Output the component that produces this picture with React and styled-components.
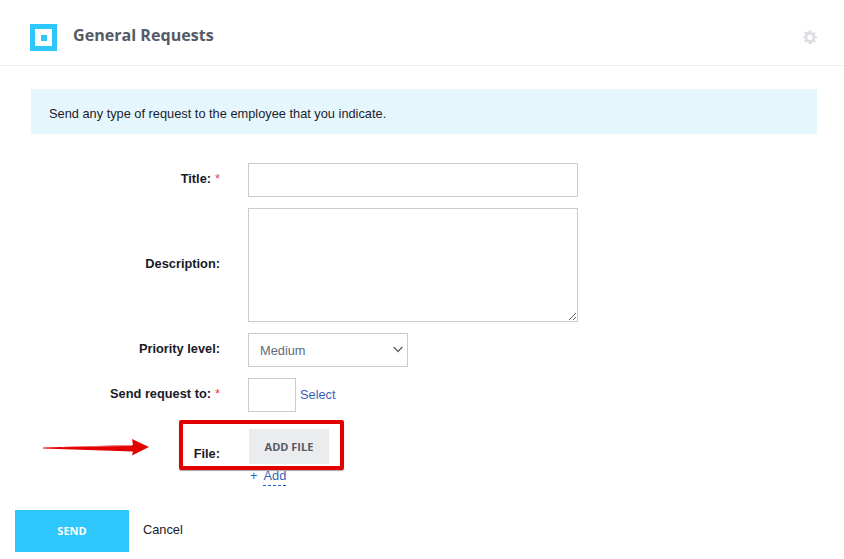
import React from 'react'
import styled, { createGlobalStyle } from 'styled-components'

const GlobalStyle = createGlobalStyle`
  html, body {
    margin: 0;
    padding: 0;
    background: #fff;
  }
  body {
    font-family: "Liberation Sans", Arial, sans-serif;
    font-size: 12.8px;
    color: #1a1a2a;
  }
`

const Page = styled.div`
  position: relative;
  width: 844px;
  height: 559px;
  overflow: hidden;
`

const Header = styled.header`
  display: flex;
  align-items: center;
  height: 66px;
  padding: 0 27px 0 30px;
  box-sizing: border-box;
  border-bottom: 1px solid #eeeff0;
`

const Logo = styled.div`
  display: flex;
  align-items: center;
  justify-content: center;
  width: 27px;
  height: 27px;
  margin-top: 10px;
  box-sizing: border-box;
  border: 5px solid #2ec7fb;
  &::after {
    content: '';
    width: 6px;
    height: 6px;
    background: #2ec7fb;
  }
`

const Title = styled.h1`
  flex: 1;
  margin: 4px 0 0 16px;
  font-family: "Open Sans", sans-serif;
  font-size: 16.1px;
  font-weight: 700;
  color: #555b66;
`

const Gear = styled.svg`
  width: 14px;
  height: 14px;
  margin-top: 8px;
  fill: #dcdee1;
`

const Notice = styled.div`
  margin: 23px 27px 0 31px;
  height: 45px;
  box-sizing: border-box;
  padding: 3px 0 0 18px;
  display: flex;
  align-items: center;
  background: #e5f7fc;
  font-size: 12.8px;
  color: #1c1c2c;
`

const Form = styled.div`
  display: flex;
  flex-direction: column;
  margin-top: 29px;
`

const Row = styled.div`
  display: grid;
  grid-template-columns: 220px 1fr;
  column-gap: 28px;
  align-items: center;
  margin-bottom: ${p => p.$gap ?? 11}px;
`

const Label = styled.label`
  text-align: right;
  font-weight: 700;
  font-size: 12.8px;
  color: #1a1a26;
  padding-top: ${p => p.$top ?? 0}px;
  padding-bottom: ${p => p.$bottom ?? 0}px;
`

const Star = styled.span`
  color: #e8404a;
  font-weight: 400;
  margin-left: 4px;
`

const TextInput = styled.input`
  display: block;
  width: ${p => p.$width}px;
  height: 34px;
  box-sizing: border-box;
  border: 1px solid #c8ccd0;
  background: #fff;
  outline: none;
`

const TextArea = styled.textarea`
  display: block;
  width: 330px;
  height: 114px;
  box-sizing: border-box;
  border: 1px solid #c8ccd0;
  background: #fff;
  outline: none;
`

const SelectWrap = styled.div`
  position: relative;
  width: 160px;
  height: 34px;
`

const Select = styled.select`
  display: block;
  width: 100%;
  height: 100%;
  box-sizing: border-box;
  padding-left: 11px;
  border: 1px solid #c8ccd0;
  border-radius: 0;
  background: #fff;
  appearance: none;
  font-family: "Liberation Sans", Arial, sans-serif;
  font-size: 12.8px;
  color: #5f6a78;
  outline: none;
`

const Chevron = styled.svg`
  position: absolute;
  right: 5px;
  top: 13px;
  width: 10px;
  height: 7px;
  fill: none;
  stroke: #5a5f66;
  stroke-width: 1.3;
  pointer-events: none;
`

const Inline = styled.div`
  display: flex;
  align-items: center;
  gap: 4px;
`

const SelectLink = styled.a`
  color: #3b5fb5;
  font-size: 12.8px;
  margin-bottom: 2px;
`

const AddFile = styled.button`
  display: block;
  width: 80px;
  height: 35px;
  margin-left: 1px;
  border: 0;
  background: #ebecee;
  color: #555b66;
  font-family: "Open Sans", sans-serif;
  font-size: 11px;
  font-weight: 700;
`

const AddRow = styled.div`
  display: flex;
  gap: 6px;
  margin: 4px 0 0 250px;
  font-size: 12.8px;
  line-height: 16px;
  color: #2a62c4;
`

const AddLink = styled.a`
  color: #3b5fb5;
  padding-bottom: 1px;
  border-bottom: 1px dashed #1f5fd0;
`

const Actions = styled.div`
  display: flex;
  align-items: flex-start;
  gap: 14px;
  margin: 24px 0 0 15px;
`

const SendButton = styled.button`
  width: 114px;
  height: 42px;
  padding: 0 0 2px;
  border: 0;
  background: #2ec7fb;
  color: #fff;
  font-family: "Open Sans", sans-serif;
  font-size: 11px;
  font-weight: 700;
`

const Cancel = styled.a`
  font-size: 12.8px;
  color: #1a1a26;
  margin-top: 12px;
`

const Highlight = styled.div`
  position: absolute;
  left: 179px;
  top: 420px;
  width: 165px;
  height: 50px;
  box-sizing: border-box;
  border: 4px solid #e30000;
  border-radius: 2px;
  box-shadow: 0 1px 1px rgba(0, 0, 0, 0.35);
`

const Arrow = styled.svg`
  position: absolute;
  left: 42px;
  top: 436px;
  width: 110px;
  height: 24px;
`

export default function App() {
  return (
    <Page>
      <GlobalStyle />
      <Header>
        <Logo />
        <Title>General Requests</Title>
        <Gear viewBox="0 0 24 24">
          <path
            fillRule="evenodd"
            d="M10 1h4l.6 3.200 1.700.7L19 3l3 3-1.900 2.700.7 1.700L24 11v3l-3.200.6-.7 1.700L22 20l-2 2-2.700-1.900-1.700.7L15 24h-5l-.6-3.200-1.700-.7L5 22l-3-3 1.900-2.700-.7-1.700L0 14v-3l3.200-.6.7-1.700L2 5l3-3 2.700 1.900 1.700-.7zM12 8a4.500 4.500 0 1 0 0 9 4.500 4.500 0 0 0 0-9z"
          />
        </Gear>
      </Header>
      <Notice>Send any type of request to the employee that you indicate.</Notice>
      <Form>
        <Row>
          <Label $bottom={4}>Title:<Star>*</Star></Label>
          <TextInput $width={330} />
        </Row>
        <Row>
          <Label $bottom={4}>Description:</Label>
          <TextArea />
        </Row>
        <Row>
          <Label $bottom={4}>Priority level:</Label>
          <SelectWrap>
            <Select defaultValue="Medium">
              <option>Low</option>
              <option>Medium</option>
              <option>High</option>
            </Select>
            <Chevron viewBox="0 0 10 7">
              <path d="M.7 1 L5 5.500 L9.300 1" />
            </Chevron>
          </SelectWrap>
        </Row>
        <Row $gap={17}>
          <Label $bottom={4}>Send request to:<Star>*</Star></Label>
          <Inline>
            <TextInput $width={48} />
            <SelectLink>Select</SelectLink>
          </Inline>
        </Row>
        <Row $gap={0}>
          <Label $top={13}>File:</Label>
          <AddFile>ADD FILE</AddFile>
        </Row>
        <AddRow>
          <span>+</span>
          <AddLink>Add</AddLink>
        </AddRow>
        <Actions>
          <SendButton>SEND</SendButton>
          <Cancel>Cancel</Cancel>
        </Actions>
      </Form>
      <Highlight />
      <Arrow viewBox="0 0 110 24">
        <path d="M1 11.500 L91 9 L90 3 L107 11 L90 19.500 L91 15.500 L1 12.500 Z" fill="#e30000" />
        <path d="M20 11 L90 9 L90 10 L20 11.300 Z" fill="#f58a8a" />
      </Arrow>
    </Page>
  )
}
